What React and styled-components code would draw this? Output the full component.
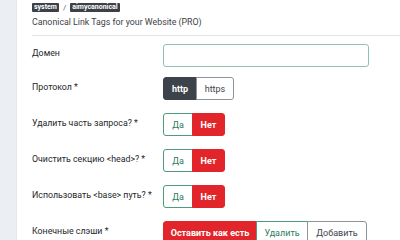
import React, { useState } from "react";
import styled, { createGlobalStyle } from "styled-components";

const Global = createGlobalStyle`
  html, body {
    margin: 0;
    padding: 0;
    background: #ffffff;
    font-family: Roboto, "Noto Sans", Arial, sans-serif;
    overflow: hidden;
  }
`;

const Page = styled.div`
  display: flex;
  width: 400px;
  height: 240px;
  overflow: hidden;
`;

const Side = styled.div`
  width: 16px;
  flex-shrink: 0;
  background: #ebeff3;
  border-right: 1px solid #e3e8ed;
`;

const Panel = styled.div`
  flex: 1;
  padding: 3px 0 0 15px;
  background: #fff;
`;

const Crumbs = styled.div`
  display: flex;
  align-items: center;
  gap: 4px;
  height: 9px;
`;

const Badge = styled.span`
  background: #3b4147;
  color: #fff;
  font-size: 7px;
  font-weight: 700;
  line-height: 9px;
  padding: 0 2px;
  border-radius: 1px;
`;

const Slash = styled.span`
  color: #555;
  font-size: 8px;
  line-height: 9px;
`;

const Subtitle = styled.div`
  margin-top: 4px;
  font-size: 8.8px;
  line-height: 12px;
  color: #3d4247;
`;

const Rule = styled.hr`
  margin: 7px 0 0;
  border: 0;
  border-top: 1px solid #dfe3e7;
`;

const Form = styled.div`
  display: flex;
  flex-direction: column;
  gap: 13px;
  padding-top: 8px;
`;

const Row = styled.div`
  display: grid;
  grid-template-columns: 131px auto;
  align-items: start;
  margin-bottom: ${(p) => p.$pull || 0}px;
`;

const Label = styled.div`
  font-size: 8.8px;
  line-height: 12px;
  color: #23272b;
  padding-top: ${(p) => p.$top || 4}px;
  white-space: nowrap;
`;

const Input = styled.input`
  width: 206px;
  height: 23px;
  box-sizing: border-box;
  border: 1px solid #8cc4b0;
  border-radius: 3px;
  outline: none;
  font-family: inherit;
`;

const Group = styled.div`
  display: flex;
  height: 23px;
`;

const Btn = styled.button`
  height: 23px;
  box-sizing: border-box;
  padding: 0;
  width: ${(p) => p.$w}px;
  font-family: inherit;
  font-size: 9px;
  font-weight: ${(p) => (p.$active ? 700 : 400)};
  cursor: pointer;
  border: 1px solid ${(p) => p.$border};
  background: ${(p) => p.$bg};
  color: ${(p) => p.$color};
  border-radius: 0;
  margin-left: -1px;
  &:first-child {
    margin-left: 0;
    border-radius: 3px 0 0 3px;
  }
  &:last-child {
    border-radius: 0 3px 3px 0;
  }
`;

const looks = {
  dark: { $bg: "#3d434b", $color: "#fff", $border: "#3d434b" },
  red: { $bg: "#e2252b", $color: "#fff", $border: "#e2252b" },
  green: { $bg: "#fff", $color: "#2d7c5c", $border: "#4f9a7c" },
  gray: { $bg: "#fff", $color: "#3d434b", $border: "#8d949b" },
};

const Toggle = ({ options, value, kinds, widths }) => (
  <Group>
    {options.map((o, i) => {
      const active = o === value;
      return (
        <Btn
          key={o}
          $w={widths[i]}
          $active={active}
          {...looks[active ? kinds.on : kinds.off[i]]}
        >
          {o}
        </Btn>
      );
    })}
  </Group>
);

export default function App() {
  const [domain, setDomain] = useState("");
  const yesNo = { on: "red", off: ["green", "green"] };
  return (
    <Page>
      <Global />
      <Side />
      <Panel>
        <Crumbs>
          <Badge>system</Badge>
          <Slash>/</Slash>
          <Badge>aimycanonical</Badge>
        </Crumbs>
        <Subtitle>Canonical Link Tags for your Website (PRO)</Subtitle>
        <Rule />
        <Form>
          <Row $pull={-3}>
            <Label $top={3}>Домен</Label>
            <Input value={domain} onChange={(e) => setDomain(e.target.value)} />
          </Row>
          <Row>
            <Label>Протокол *</Label>
            <Toggle
              options={["http", "https"]}
              value="http"
              kinds={{ on: "dark", off: ["gray", "gray"] }}
              widths={[34, 38]}
            />
          </Row>
          <Row>
            <Label>Удалить часть запроса? *</Label>
            <Toggle options={["Да", "Нет"]} value="Нет" kinds={yesNo} widths={[30, 33]} />
          </Row>
          <Row>
            <Label>Очистить секцию &lt;head&gt;? *</Label>
            <Toggle options={["Да", "Нет"]} value="Нет" kinds={yesNo} widths={[30, 33]} />
          </Row>
          <Row>
            <Label>Использовать &lt;base&gt; путь? *</Label>
            <Toggle options={["Да", "Нет"]} value="Нет" kinds={yesNo} widths={[30, 33]} />
          </Row>
          <Row>
            <Label>Конечные слэши *</Label>
            <Toggle
              options={["Оставить как есть", "Удалить", "Добавить"]}
              value="Оставить как есть"
              kinds={{ on: "red", off: ["red", "green", "gray"] }}
              widths={[94, 52, 60]}
            />
          </Row>
        </Form>
      </Panel>
    </Page>
  );
}
